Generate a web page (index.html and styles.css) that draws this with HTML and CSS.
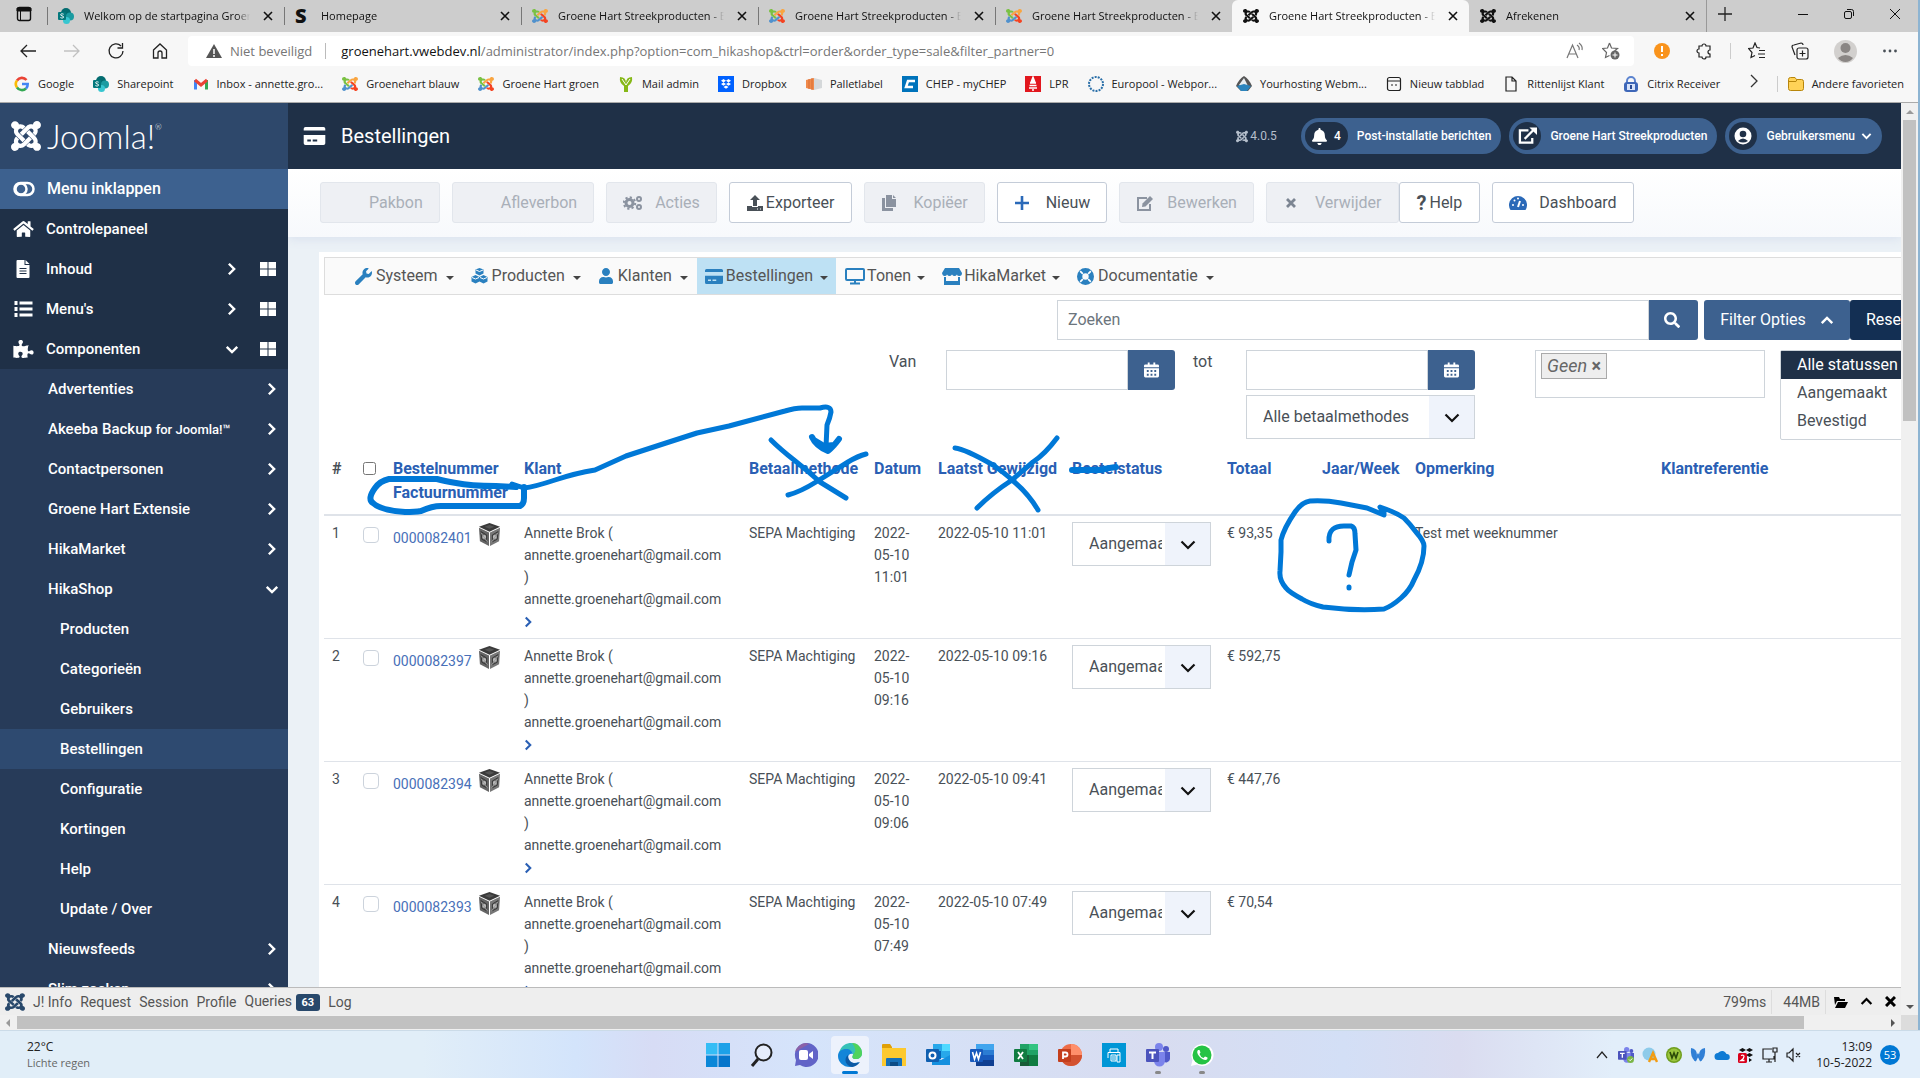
FILE: index.html
```html
<!DOCTYPE html>
<html lang="nl">
<head>
  <meta charset="UTF-8" />
  <title>Bestellingen - Groene Hart Streekproducten</title>
  <link rel="stylesheet" href="styles.css">
</head>
<body>

<svg class="defs" aria-hidden="true">
  <symbol id="joomla" viewBox="0 0 448 512" preserveAspectRatio="none">
    <path class="j1" d="M.6 92.1C.6 58.8 27.4 32 60.4 32c30 0 54.5 21.9 59.2 50.2 32.6-7.6 67.1.6 96.5 30l-44.3 44.3c-20.5-20.5-42.6-16.3-55.4-3.5-14.3 14.3-14.3 37.9 0 52.2l99.5 99.5-44 44.3c-87.7-87.2-49.7-49.7-99.8-99.7-26.8-26.5-35-64.8-24.8-98.9C20.4 144.6.6 120.7.6 92.1z"/>
    <path class="j2" d="M130.1 208.5l44.3 44.3c10-10 89.7-89.7 99.7-99.8 14.3-14.3 37.6-14.3 51.9 0 12.8 12.8 17 35-3.5 55.4l44 44.3c31.2-31.2 38.5-67.6 28.9-101.2 29.2-4.1 51.9-29.2 51.9-59.5 0-33.2-26.8-60.1-59.8-60.1-30.3 0-55.4 22.5-59.5 51.6-33.8-9.9-71.7-1.5-98.3 25.1-18.3 19.1-71.1 71.5-99.6 99.9z"/>
    <path class="j3" d="M396.4 360.7c8.2-32.7-.9-68.5-26.3-93.9-11.8-12.2 5 4.7-99.5-99.7l-44.3 44.3 99.7 99.7c14.3 14.3 14.3 37.6 0 51.9-12.8 12.8-35 17-55.4-3.5l-44 44.3c27.6 30.2 68 38.8 102.7 28 5.5 27.4 29.7 48.1 58.9 48.1 33 0 59.8-26.8 59.8-60.1 0-30.2-22.5-55-51.6-59.1z"/>
    <path class="j4" d="M312.1 307.6l-44-44.3c-87 86.4-50.4 50.4-99.7 99.8-14.3 14.3-37.6 14.3-51.9 0-13.1-13.4-16.9-35.3 3.2-55.4l-44-44.3c-30.2 30.2-38 65.2-29.5 98.3-26.7 6-46.2 29.9-46.2 58.2C0 453.2 26.8 480 59.8 480c28.6 0 52.5-19.8 58.6-46.7 32.7 8.2 68.5-.6 94.2-26 32.1-32 12.2-12.4 99.5-99.7z"/>
  </symbol>
  <symbol id="close" viewBox="0 0 16 16"><path d="M4 4l8 8M12 4l-8 8" fill="none" stroke="currentColor" stroke-width="1.6"/></symbol>
  <symbol id="sharepoint" viewBox="0 0 16 16"><circle cx="8" cy="5" r="5" fill="#036c70"/><circle cx="12" cy="8.500" r="4" fill="#1a9ba1"/><circle cx="8.500" cy="12.500" r="3.500" fill="#37c6d0"/><rect y="4" width="8" height="8" rx="1" fill="#03787c"/><path d="M5.600 6.200c-1.400-.7-3-.4-3 .6 0 1.300 3 .8 3 2.200 0 1.100-1.800 1.300-3.200.6" fill="none" stroke="#fff"/></symbol>
  <symbol id="right" viewBox="0 0 10 16"><path d="M2 2l6 6-6 6" fill="none" stroke="currentColor" stroke-width="2.800"/></symbol>
  <symbol id="down" viewBox="0 0 16 10"><path d="M2 2l6 6 6-6" fill="none" stroke="currentColor" stroke-width="2.800"/></symbol>
  <symbol id="down-thin" viewBox="0 0 16 10"><path d="M1.500 1.500L8 8l6.500-6.500" fill="none" stroke="currentColor" stroke-width="2.200"/></symbol>
  <symbol id="grid" viewBox="0 0 16 14"><path d="M0 0h7.500v6.500H0zM8.500 0H16v6.500H8.500zM0 7.500h7.500V14H0zM8.500 7.500H16V14H8.500z" fill="currentColor"/></symbol>
  <symbol id="card" viewBox="0 0 24 20"><path d="M2 0h20a2 2 0 0 1 2 2v2H0V2a2 2 0 0 1 2-2zM0 9h24v9a2 2 0 0 1-2 2H2a2 2 0 0 1-2-2zM4 14v2h4v-2zM10 14v2h5v-2z" fill="currentColor" fill-rule="evenodd"/></symbol>
  <symbol id="calendar" viewBox="0 0 16 16"><path d="M4 0h2v2h4V0h2v2h2.500A1.500 1.500 0 0 1 16 3.500V5H0V3.500A1.500 1.500 0 0 1 1.500 2H4zM0 6h16v8.500a1.500 1.500 0 0 1-1.500 1.500h-13A1.500 1.500 0 0 1 0 14.500zM3 8v2h2V8zM7 8v2h2V8zM11 8v2h2V8zM3 12v2h2v-2zM7 12v2h2v-2zM11 12v2h2v-2z" fill="currentColor" fill-rule="evenodd"/></symbol>
  <symbol id="box3d" viewBox="0 0 24 24"><path d="M12 0l11 4-11 5L1 4z" fill="#3a3a3a"/><path d="M1 5l10.500 5v14L2 19z" fill="#666"/><path d="M23 5l-10.500 5v14L22 19z" fill="#777"/><path d="M3 9l6 3.500v7L4 17zM21 9l-6 3.500v7l5-2.500z" fill="none" stroke="#333"/><circle cx="6.500" cy="14.500" r="2" fill="#bbb"/><circle cx="17.500" cy="14.500" r="2" fill="#bbb"/><path d="M7 4l5-2 5 2-5 2z" fill="#555"/><path d="M3 10l7 10M21 10l-7 10" stroke="#999"/></symbol>
  <symbol id="teams" viewBox="0 0 24 24"><circle cx="20" cy="6" r="3" fill="#5059c9"/><circle cx="13" cy="4" r="4" fill="#7b83eb"/><path d="M17 9h7v7a4 4 0 0 1-7 2z" fill="#5059c9"/><path d="M8 9h11v9a5 5 0 0 1-11 0z" fill="#7b83eb"/><rect y="6" width="13" height="13" rx="1" fill="#4b53bc"/><path d="M3 9.500h7M6.500 9.500V16" stroke="#fff" stroke-width="2"/></symbol>
</svg>

<div class="window">
  <header class="tabstrip">
    <button class="tab-actions" aria-label="Tabbladacties"><svg width="16" height="16" viewBox="0 0 16 16"><rect x="1.500" y="1.500" width="13" height="13" rx="2" fill="none" stroke="#111" stroke-width="1.400"/><path d="M1 2h14v3H1zM4.500 5v9" stroke="#111" /></svg></button>
    <div class="tab"><svg class="ic"><use href="#sharepoint"/></svg><span>Welkom op de startpagina Groene Hart</span><button aria-label="Sluiten"><svg class="ic"><use href="#close"/></svg></button></div>
    <div class="tab"><b class="s-logo">S</b><span>Homepage</span><button aria-label="Sluiten"><svg class="ic"><use href="#close"/></svg></button></div>
    <div class="tab"><svg class="ic color"><use href="#joomla"/></svg><span>Groene Hart Streekproducten - Bestel</span><button aria-label="Sluiten"><svg class="ic"><use href="#close"/></svg></button></div>
    <div class="tab"><svg class="ic color"><use href="#joomla"/></svg><span>Groene Hart Streekproducten - Bestel</span><button aria-label="Sluiten"><svg class="ic"><use href="#close"/></svg></button></div>
    <div class="tab"><svg class="ic color"><use href="#joomla"/></svg><span>Groene Hart Streekproducten - Bestel</span><button aria-label="Sluiten"><svg class="ic"><use href="#close"/></svg></button></div>
    <div class="tab active"><svg class="ic"><use href="#joomla"/></svg><span>Groene Hart Streekproducten - Bestel</span><button aria-label="Sluiten"><svg class="ic"><use href="#close"/></svg></button></div>
    <div class="tab"><svg class="ic"><use href="#joomla"/></svg><span>Afrekenen</span><button aria-label="Sluiten"><svg class="ic"><use href="#close"/></svg></button></div>
    <button class="new-tab" aria-label="Nieuw tabblad"><svg width="16" height="16" viewBox="0 0 16 16"><path d="M8 1v14M1 8h14" stroke="#222" stroke-width="1.300"/></svg></button>
    <div class="win-buttons">
      <button aria-label="Minimaliseren"><svg width="12" height="12"><path d="M1 6.500h10" stroke="#111"/></svg></button>
      <button aria-label="Vorig formaat"><svg width="12" height="12" viewBox="0 0 12 12"><rect x="1.500" y="3.500" width="7" height="7" rx="1.500" fill="none" stroke="#111"/><path d="M4 1.500h4.500a2 2 0 0 1 2 2V8" fill="none" stroke="#111"/></svg></button>
      <button aria-label="Venster sluiten"><svg width="12" height="12"><path d="M1 1l10 10M11 1L1 11" stroke="#111"/></svg></button>
    </div>
  </header>

  <div class="toolbar">
    <div class="nav-buttons">
      <button aria-label="Vorige"><svg width="18" height="18" viewBox="0 0 18 18"><path d="M17 9H2M8 3L2 9l6 6"/></svg></button>
      <button class="off" aria-label="Volgende"><svg width="18" height="18" viewBox="0 0 18 18"><path d="M1 9h15M10 3l6 6-6 6"/></svg></button>
      <button aria-label="Vernieuwen"><svg width="18" height="18" viewBox="0 0 18 18"><path d="M16 9a7 7 0 1 1-2-5M15.500 1v5h-5"/></svg></button>
      <button aria-label="Start"><svg width="18" height="18" viewBox="0 0 18 18"><path d="M2.500 8L9 2l6.500 6v8H11v-5a2 2 0 0 0-4 0v5H2.500z"/></svg></button>
    </div>
    <div class="address">
      <svg width="16" height="16" viewBox="0 0 16 16"><path d="M8 1l8 14H0z" fill="#555"/><path d="M8 6v5M8 12v2" stroke="#fff" stroke-width="1.500"/></svg>
      <span class="insecure">Niet beveiligd</span>
      <span class="url"><b>groenehart.vwebdev.nl</b>/administrator/index.php?option=com_hikashop&amp;ctrl=order&amp;order_type=sale&amp;filter_partner=0</span>
      <svg class="read" width="18" height="18" viewBox="0 0 18 18"><path d="M1 16L6.500 3 12 16M3 12h7M11 3q3 2 2 5M13 1q4 3 3 7" fill="none" stroke="#777" stroke-width="1.200"/></svg>
      <svg width="18" height="18" viewBox="0 0 18 18"><path d="M7.500 1l2 5 6 .5-3 2.500M7.500 1l-2 5-5 .5 4 4-1 5 4-2" fill="none" stroke="#666" stroke-width="1.200"/><circle cx="13" cy="13" r="4.500" fill="#666"/><path d="M13 10.500v5M10.500 13h5" stroke="#fff"/></svg>
    </div>
    <div class="ext-buttons">
      <svg width="16" height="16" viewBox="0 0 16 16"><circle cx="8" cy="8" r="8" fill="#f9931c"/><path d="M8 3v6M8 11v2" stroke="#fff" stroke-width="2"/></svg>
      <svg class="line" width="18" height="18" viewBox="0 0 18 18"><path d="M5 4h2a2 2 0 0 1 4 0h4v4a2 2 0 0 0 0 4v3h-4a2 2 0 0 1-4 0H4v-4a2 2 0 0 1 0-4V4z"/></svg>
      <i class="bar"></i>
      <svg class="line" width="18" height="18" viewBox="0 0 18 18"><path d="M12 6l-3-.5L7 1 5 6l-4.500.500 3.500 4-1 5 4-2M11 8.500h6M10 12h7M11 15.500h6"/></svg>
      <svg class="line" width="18" height="18" viewBox="0 0 18 18"><rect x="6" y="6" width="11" height="11" rx="2"/><path d="M11.500 8.500v6M8.500 11.500h6M4 13L1 5q0-2 2-2l7-2q2 0 2 2"/></svg>
      <svg width="23" height="23" viewBox="0 0 23 23"><circle cx="11.500" cy="11.500" r="11.500" fill="#d2d0ce"/><circle cx="11.500" cy="8" r="5" fill="#8a8684"/><path d="M4 18q7.500-6 15 0-3 4-7.500 4T4 18z" fill="#8a8684"/></svg>
      <svg width="16" height="16"><circle cx="2.500" cy="8" r="1.400"/><circle cx="8" cy="8" r="1.400"/><circle cx="13.500" cy="8" r="1.400"/></svg>
    </div>
  </div>

  <nav class="favorites">
    <a href="#"><svg class="ic" viewBox="0 0 16 16" fill="none" stroke-width="2.600"><path d="M3 4.500A6 6 0 0 1 12.500 4" stroke="#ea4335"/><path d="M3 4.500a6 6 0 0 0 0 7" stroke="#fbbc05"/><path d="M3 11.500a6 6 0 0 0 9 1" stroke="#34a853"/><path d="M12 12.500A6 6 0 0 0 13.700 8H8" stroke="#4285f4"/></svg>Google</a>
    <a href="#"><svg class="ic"><use href="#sharepoint"/></svg>Sharepoint</a>
    <a href="#"><svg class="ic" viewBox="0 0 16 16" fill="none" stroke-width="3"><path d="M2.500 13.500V4" stroke="#4285f4"/><path d="M13.500 13.500V4" stroke="#34a853"/><path d="M2 4l6 5 6-5" stroke="#ea4335"/></svg>Inbox - annette.gro...</a>
    <a href="#"><svg class="ic color"><use href="#joomla"/></svg>Groenehart blauw</a>
    <a href="#"><svg class="ic color"><use href="#joomla"/></svg>Groene Hart groen</a>
    <a href="#"><svg class="ic" viewBox="0 0 16 16"><path d="M2 1q6 0 6 6 0-6 6-6 1 6-4 9v6H6v-6Q1 7 2 1z" fill="#86b817"/><path d="M4 3l4 6 4-6" stroke="#fff" fill="none"/></svg>Mail admin</a>
    <a href="#"><svg class="ic" viewBox="0 0 16 16"><rect width="16" height="16" fill="#0061ff"/><path d="M5.500 3L8 4.700 5.500 6.400 3 4.700zM10.500 3L13 4.700l-2.500 1.700L8 4.700zM5.500 6.400L8 8.100 5.500 9.800 3 8.100zM10.500 6.400L13 8.100l-2.500 1.700L8 8.100zM8 9.500l2.500 1.600L8 12.800l-2.500-1.700z" fill="#fff"/></svg>Dropbox</a>
    <a href="#"><svg class="ic" viewBox="0 0 16 16"><path d="M0 4l8-2v12l-8-2z" fill="#f08a4b"/><path d="M8 2l8 2v8l-8 2z" fill="#d5d8da"/><path d="M3 3v10M6 2v12" stroke="#d96f35"/></svg>Palletlabel</a>
    <a href="#"><svg class="ic" viewBox="0 0 16 16"><rect width="16" height="16" fill="#0073bb"/><path d="M13 5H6l-2 6h7" fill="none" stroke="#fff" stroke-width="2.500"/></svg>CHEP - myCHEP</a>
    <a href="#"><svg class="ic" viewBox="0 0 16 16"><rect width="16" height="16" fill="#e2171e"/><path d="M8 1l2 5H6zM5 7h6M4.500 9.500h7M4 12h8M7 14h2" fill="#fff" stroke="#fff" stroke-width="1.300"/></svg>LPR</a>
    <a href="#"><svg class="ic" viewBox="0 0 16 16"><circle cx="8" cy="8" r="7" fill="none" stroke="#2a6fa8" stroke-width="2" stroke-dasharray="2 1.140"/></svg>Europool - Webpor...</a>
    <a href="#"><svg class="ic" viewBox="0 0 16 16"><path d="M8 0q5 3 8 10l-4 5H5L0 10Q3 3 8 0z" fill="#555"/><path d="M8 2l4 8-4 3-5-4z" fill="#e8eef2"/><path d="M1 10l7-2 7 2-4 5H5z" fill="#2b84bd"/></svg>Yourhosting Webm...</a>
    <a href="#"><svg class="ic line" viewBox="0 0 16 16"><rect x="1.500" y="1.500" width="13" height="13" rx="2"/><path d="M2 5h12M5 9h2M9 9h2"/></svg>Nieuw tabblad</a>
    <a href="#"><svg class="ic line" viewBox="0 0 16 16"><path d="M3 1h6l4 4v10H3zM9 1v4h4"/></svg>Rittenlijst Klant</a>
    <a href="#"><svg class="ic" viewBox="0 0 16 16"><path d="M4 7V5a4 4 0 0 1 8 0v2" fill="none" stroke="#5b83cf" stroke-width="2"/><rect x="1" y="6" width="14" height="10" rx="3" fill="#3e67b8"/><path d="M4 8h8v6H4z" fill="#d7e3fa"/><path d="M8 9v4" stroke="#2a4a94" stroke-width="2"/></svg>Citrix Receiver</a>
    <button class="more" aria-label="Meer"><svg width="8" height="14" viewBox="0 0 8 14"><path d="M1 1l6 6-6 6" fill="none" stroke="#333" stroke-width="1.300"/></svg></button>
    <a href="#" class="other"><svg class="ic" viewBox="0 0 16 16"><path d="M.5 3.500a2 2 0 0 1 2-2H7l1.500 2h5a2 2 0 0 1 2 2v7a2 2 0 0 1-2 2h-11a2 2 0 0 1-2-2z" fill="#ffd257" stroke="#b8860b"/><path d="M1 5.500h7l1-2" stroke="#b8860b" fill="none"/></svg>Andere favorieten</a>
  </nav>

  <div class="viewport">
    <div class="page">
      <div class="admin">
        <aside class="sidebar">
          <div class="brand"><svg width="30" height="34"><use href="#joomla"/></svg><span>Joomla!</span><sup>®</sup></div>
          <button class="collapse"><svg width="22" height="16" viewBox="0 0 22 16"><rect x="1.500" y="2" width="19" height="12" rx="6" fill="none" stroke="#fff" stroke-width="2.500"/><circle cx="8" cy="8" r="5.500" fill="none" stroke="#fff" stroke-width="2.500"/></svg>Menu inklappen</button>
          <nav class="main-menu">
            <a href="#"><svg class="mi" viewBox="0 0 576 512"><path fill="#fff" d="M280.37 148.26L96 300.11V464a16 16 0 0 0 16 16l112.060-.29a16 16 0 0 0 15.920-16V368a16 16 0 0 1 16-16h64a16 16 0 0 1 16 16v95.640a16 16 0 0 0 16 16.050L464 480a16 16 0 0 0 16-16V300L295.670 148.260a12.190 12.190 0 0 0-15.300 0zM571.600 251.470L488 182.560V44.050a12 12 0 0 0-12-12h-56a12 12 0 0 0-12 12v72.610L318.470 43a48 48 0 0 0-61 0L4.340 251.470a12 12 0 0 0-1.600 16.900l25.500 31A12 12 0 0 0 45.150 301l235.220-193.740a12.190 12.190 0 0 1 15.300 0L530.900 301a12 12 0 0 0 16.900-1.600l25.500-31a12 12 0 0 0-1.700-16.930z"/></svg><span>Controlepaneel</span></a>
            <a href="#"><svg class="mi" viewBox="0 0 20 18"><path d="M4 0h7v5h5v12a1 1 0 0 1-1 1H4a1 1 0 0 1-1-1V1a1 1 0 0 1 1-1zM12 0l4 4h-4z" fill="#fff"/><path d="M6 8.500h7M6 11h7M6 13.500h7" stroke="#1f3047"/></svg><span>Inhoud</span><svg class="chev"><use href="#right"/></svg><svg class="gr"><use href="#grid"/></svg></a>
            <a href="#"><svg class="mi" viewBox="0 0 20 18"><path d="M1 3h3M1 9h3M1 15h3" stroke="#fff" stroke-width="4"/><path d="M6 3h13M6 9h13M6 15h13" stroke="#fff" stroke-width="3"/></svg><span>Menu's</span><svg class="chev"><use href="#right"/></svg><svg class="gr"><use href="#grid"/></svg></a>
            <a href="#"><svg class="mi" viewBox="0 0 576 512"><path fill="#fff" d="M519.442 288.651c-41.519 0-59.5 31.593-82.058 31.593C377.409 320.244 432 144 432 144s-196.288 80-196.288-3.297c0-35.827 36.288-46.250 36.288-85.985C272 19.216 243.885 0 210.539 0c-34.654 0-66.366 18.891-66.366 56.346 0 41.364 31.711 59.277 31.711 81.750C175.885 207.719 0 166.758 0 166.758v333.237s178.635 41.047 178.635-28.662c0-22.473-40-40.107-40-81.471 0-37.456 29.250-56.346 63.577-56.346 33.673 0 61.788 19.216 61.788 54.717 0 39.735-36.288 50.158-36.288 85.985 0 60.803 129.675 25.730 181.230 25.730 0 0-34.725-120.101 25.827-120.101 35.962 0 46.423 36.152 86.308 36.152C556.712 416 576 387.990 576 354.443c0-34.199-18.962-65.792-56.558-65.792z"/></svg><span>Componenten</span><svg class="chev open"><use href="#down"/></svg><svg class="gr"><use href="#grid"/></svg></a>
          </nav>
          <nav class="sub-menu">
            <a href="#"><span>Advertenties</span><svg class="chev"><use href="#right"/></svg></a>
            <a href="#"><span>Akeeba Backup <small>for Joomla!™</small></span><svg class="chev"><use href="#right"/></svg></a>
            <a href="#"><span>Contactpersonen</span><svg class="chev"><use href="#right"/></svg></a>
            <a href="#"><span>Groene Hart Extensie</span><svg class="chev"><use href="#right"/></svg></a>
            <a href="#"><span>HikaMarket</span><svg class="chev"><use href="#right"/></svg></a>
            <a href="#"><span>HikaShop</span><svg class="chev open"><use href="#down"/></svg></a>
            <a href="#" class="lvl3">Producten</a>
            <a href="#" class="lvl3">Categorieën</a>
            <a href="#" class="lvl3">Gebruikers</a>
            <a href="#" class="lvl3 current">Bestellingen</a>
            <a href="#" class="lvl3">Configuratie</a>
            <a href="#" class="lvl3">Kortingen</a>
            <a href="#" class="lvl3">Help</a>
            <a href="#" class="lvl3">Update / Over</a>
            <a href="#"><span>Nieuwsfeeds</span><svg class="chev"><use href="#right"/></svg></a>
            <a href="#"><span>Slim zoeken</span><svg class="chev"><use href="#right"/></svg></a>
          </nav>
        </aside>

        <main class="content">
          <div class="topbar">
            <svg width="23" height="18"><use href="#card"/></svg>
            <h1>Bestellingen</h1>
            <span class="version"><svg width="12" height="13"><use href="#joomla"/></svg>4.0.5</span>
            <a href="#" class="pill"><span class="pill-ic wide"><svg width="15" height="17" viewBox="0 0 448 512"><path fill="#fff" d="M224 512c35.320 0 63.970-28.650 63.970-64H160.030c0 35.350 28.650 64 63.970 64zm215.390-149.710c-19.320-20.760-55.470-51.990-55.470-154.290 0-77.700-54.480-139.900-127.940-155.160V32c0-17.670-14.320-32-31.980-32s-31.980 14.330-31.980 32v20.840C118.560 68.100 64.080 130.300 64.080 208c0 102.300-36.150 133.530-55.470 154.290-6 6.450-8.660 14.160-8.610 21.710.11 16.400 12.980 32 32.100 32h383.800c19.120 0 32-15.600 32.100-32 .05-7.550-2.610-15.270-8.610-21.710z"/></svg>4</span>Post-installatie berichten</a>
            <a href="#" class="pill"><span class="pill-ic"><svg width="19" height="18" viewBox="0 0 20 18" fill="none" stroke="#fff" stroke-width="2.400"><path d="M11 3H2v13h13v-5M7 12l9-9"/><path d="M12 0h8v8z" fill="#fff" stroke="none"/></svg></span>Groene Hart Streekproducten</a>
            <a href="#" class="pill"><span class="pill-ic"><svg width="18" height="18" viewBox="0 0 18 18"><circle cx="9" cy="9" r="8.500" fill="#fff"/><circle cx="9" cy="7" r="3.300" fill="#1f3047"/><path d="M4 14q5-5 10 0-5 3-10 0z" fill="#1f3047"/></svg></span>Gebruikersmenu<svg class="caret" width="11" height="8"><use href="#down"/></svg></a>
          </div>

          <div class="actions">
            <button class="btn" disabled><i></i>Pakbon</button>
            <button class="btn" disabled><i></i>Afleverbon</button>
            <button class="btn wide-ic" disabled><svg width="20" height="16" viewBox="0 0 20 16" fill="none" stroke="#8b93a0"><circle cx="6.500" cy="8" r="3.500" stroke-width="3"/><circle cx="6.500" cy="8" r="5.700" stroke-width="2" stroke-dasharray="2.200 2.200"/><circle cx="16" cy="4" r="2" stroke-width="2"/><circle cx="16" cy="12" r="2" stroke-width="2"/></svg>Acties</button>
            <button class="btn tight"><svg width="16" height="16" viewBox="0 0 16 16"><path d="M8 0l5 5H10v6H6V5H3zM0 11h5v1h6v-1h5v5H0z" fill="#495057"/><path d="M10 14h1M13 14h1" stroke="#fff"/></svg>Exporteer</button>
            <button class="btn" disabled><svg width="16" height="16" viewBox="0 0 16 16"><path d="M5 0h6v4h4v8H5zM12 0l3 3h-3zM1 3h3v10h8v3H1z" fill="#8b93a0"/></svg>Kopiëer</button>
            <button class="btn"><svg width="16" height="16"><path d="M8 1v14M1 8h14" stroke="#2a69b8" stroke-width="2.600"/></svg>Nieuw</button>
            <button class="btn wide-ic" disabled><svg width="19" height="16" viewBox="0 0 19 16"><path d="M11 3H2v12h12V9" fill="none" stroke="#8b93a0" stroke-width="2"/><path d="M6 12l.500-3.500L14 1l3 3-7.500 7.500z" fill="#8b93a0"/></svg>Bewerken</button>
            <button class="btn" disabled><svg width="16" height="16"><path d="M4 4l8 8M12 4l-8 8" stroke="#7c8592" stroke-width="2.800"/></svg>Verwijder</button>
            <button class="btn tight join"><b>?</b>Help</button>
            <button class="btn wide-ic"><svg width="18" height="16" viewBox="0 0 18 16"><path d="M1.500 15a9 9 0 1 1 15 0z" fill="#2a69b8"/><path d="M9 12l2-6" stroke="#fff" stroke-width="2"/><circle cx="4" cy="10" r="1" fill="#fff"/><circle cx="5.500" cy="5.500" r="1" fill="#fff"/><circle cx="9" cy="3.500" r="1" fill="#fff"/><circle cx="14" cy="10" r="1" fill="#fff"/></svg>Dashboard</button>
          </div>

          <section class="card">
            <nav class="hika-menu">
              <a href="#"><svg width="17" height="17" viewBox="0 0 512 512"><path fill="#2a80bf" d="M507.730 109.100c-2.240-9.030-13.540-12.090-20.120-5.510l-74.360 74.360-67.880-11.310-11.310-67.880 74.360-74.360c6.620-6.620 3.430-17.900-5.660-20.160-47.380-11.740-99.550.91-136.580 37.930-39.640 39.640-50.550 97.100-34.050 147.200L18.740 402.760c-24.990 24.990-24.990 65.510 0 90.500 24.990 24.990 65.510 24.990 90.500 0l213.210-213.210c50.120 16.710 107.470 5.680 147.370-34.220 37.070-37.070 49.700-89.320 37.910-136.730z"/></svg>Systeem</a>
              <a href="#"><svg width="17" height="16" viewBox="0 0 17 16"><path d="M8.500 0l4 1.500v4l-4 2-4-2v-4zM4.500 7l4 2v4.500l-4 2-4-2V9zM12.500 7l4 2v4.500l-4 2-4-2V9z" fill="#2a80bf"/><path d="M5 2l3.500 1.500L12 2M1 9.500L4.500 11 8 9.500M9 9.500l3.500 1.500L16 9.500" stroke="#fff" fill="none"/></svg>Producten</a>
              <a href="#"><svg width="16" height="16" viewBox="0 0 448 512"><path fill="#2a80bf" d="M224 256c70.700 0 128-57.300 128-128S294.700 0 224 0 96 57.300 96 128s57.300 128 128 128zm89.600 32h-16.700c-22.200 10.200-46.900 16-72.900 16s-50.600-5.800-72.900-16h-16.700C60.200 288 0 348.200 0 422.400V464c0 26.500 21.500 48 48 48h352c26.500 0 48-21.500 48-48v-41.600c0-74.200-60.200-134.400-134.400-134.400z"/></svg>Klanten</a>
              <a href="#" class="on"><svg width="18" height="15"><use href="#card"/></svg>Bestellingen</a>
              <a href="#" class="snug"><svg width="20" height="17" viewBox="0 0 20 17"><rect x="1" y="1" width="18" height="11" rx="1" fill="none" stroke="#2a80bf" stroke-width="2"/><path d="M10 12v3M5 15.500h10" stroke="#2a80bf" stroke-width="2"/></svg>Tonen</a>
              <a href="#" class="snug"><svg width="20" height="17" viewBox="0 0 20 17"><path d="M3 0h14l3 5q0 3-2.500 3T15 6.500Q14 8 12.500 8T10 6.500Q9 8 7.500 8T5 6.500Q4.500 8 2.500 8T0 5zM2 9h2v4h12V9h2v8H2z" fill="#2a80bf"/></svg>HikaMarket</a>
              <a href="#"><svg width="17" height="17" viewBox="0 0 16 16"><circle cx="8" cy="8" r="5.500" fill="none" stroke="#2a80bf" stroke-width="5"/><path d="M3 3l2.500 2.500M13 3l-2.500 2.500M3 13l2.500-2.500M13 13l-2.500-2.500" stroke="#fff" stroke-width="1.600"/></svg>Documentatie</a>
            </nav>

            <form class="filters">
              <div class="frow">
                <div class="group search"><input type="text" placeholder="Zoeken" aria-label="Zoeken"><button type="button" aria-label="Zoek"><svg width="16" height="16" viewBox="0 0 512 512"><path fill="#fff" d="M505 442.700L405.300 343c-4.500-4.500-10.600-7-17-7H372c27.600-35.300 44-79.700 44-128C416 93.100 322.900 0 208 0S0 93.100 0 208s93.100 208 208 208c48.300 0 92.700-16.400 128-44v16.300c0 6.400 2.500 12.500 7 17l99.700 99.700c9.400 9.400 24.600 9.400 33.900 0l28.300-28.300c9.400-9.400 9.400-24.600.1-34zM208 336c-70.700 0-128-57.200-128-128 0-70.700 57.200-128 128-128 70.700 0 128 57.200 128 128 0 70.700-57.200 128-128 128z"/></svg></button></div>
                <button type="button" class="filter-btn">Filter Opties<svg class="up" width="14" height="9"><use href="#down"/></svg></button>
                <button type="button" class="reset-btn">Reset</button>
              </div>
              <div class="frow second">
                <label class="van" for="from">Van</label>
                <div class="group date"><input type="text" id="from"><button type="button" aria-label="Kalender"><svg width="15" height="16"><use href="#calendar"/></svg></button></div>
                <label class="tot" for="to">tot</label>
                <div class="pay">
                  <div class="group date"><input type="text" id="to"><button type="button" aria-label="Kalender"><svg width="15" height="16"><use href="#calendar"/></svg></button></div>
                  <div class="pick"><select aria-label="Betaalmethode"><option>Alle betaalmethodes</option></select><svg><use href="#down-thin"/></svg></div>
                </div>
                <div class="tags"><span>Geen <b>×</b></span></div>
                <select class="statuses" multiple size="3" aria-label="Statussen"><option selected>Alle statussen</option><option>Aangemaakt</option><option>Bevestigd</option></select>
              </div>
            </form>

            <table class="orders">
              <colgroup><col class="c-num"><col class="c-check"><col class="c-order"><col class="c-client"><col class="c-pay"><col class="c-date"><col class="c-mod"><col class="c-status"><col class="c-total"><col class="c-week"><col class="c-note"><col></colgroup>
              <thead>
                <tr><th class="hash">#</th><th><input type="checkbox" aria-label="Alles"></th><th><a href="#">Bestelnummer</a><br><a href="#">Factuurnummer</a></th><th><a href="#">Klant</a></th><th><a href="#">Betaalmethode</a></th><th><a href="#">Datum</a></th><th><a href="#">Laatst Gewijzigd</a></th><th><a href="#">Bestelstatus</a></th><th><a href="#">Totaal</a></th><th><a href="#">Jaar/Week</a></th><th><a href="#">Opmerking</a></th><th><a href="#">Klantreferentie</a></th></tr>
              </thead>
              <tbody>
                <tr>
                  <td>1</td><td><input type="checkbox" aria-label="Bestelling 1"></td>
                  <td><a href="#" class="order">0000082401<svg><use href="#box3d"/></svg></a></td>
                  <td class="client">Annette Brok ( annette.groenehart@gmail.com ) annette.groenehart@gmail.com<br><a href="#" aria-label="Klant"><svg class="go"><use href="#right"/></svg></a></td>
                  <td>SEPA Machtiging</td><td>2022-05-10 11:01</td><td class="nw">2022-05-10 11:01</td>
                  <td><div class="pick"><select aria-label="Status"><option>Aangemaakt</option></select><svg><use href="#down-thin"/></svg></div></td>
                  <td>€ 93,35</td><td></td><td>Test met weeknummer</td><td></td>
                </tr>
                <tr>
                  <td>2</td><td><input type="checkbox" aria-label="Bestelling 2"></td>
                  <td><a href="#" class="order">0000082397<svg><use href="#box3d"/></svg></a></td>
                  <td class="client">Annette Brok ( annette.groenehart@gmail.com ) annette.groenehart@gmail.com<br><a href="#" aria-label="Klant"><svg class="go"><use href="#right"/></svg></a></td>
                  <td>SEPA Machtiging</td><td>2022-05-10 09:16</td><td class="nw">2022-05-10 09:16</td>
                  <td><div class="pick"><select aria-label="Status"><option>Aangemaakt</option></select><svg><use href="#down-thin"/></svg></div></td>
                  <td>€ 592,75</td><td></td><td></td><td></td>
                </tr>
                <tr>
                  <td>3</td><td><input type="checkbox" aria-label="Bestelling 3"></td>
                  <td><a href="#" class="order">0000082394<svg><use href="#box3d"/></svg></a></td>
                  <td class="client">Annette Brok ( annette.groenehart@gmail.com ) annette.groenehart@gmail.com<br><a href="#" aria-label="Klant"><svg class="go"><use href="#right"/></svg></a></td>
                  <td>SEPA Machtiging</td><td>2022-05-10 09:06</td><td class="nw">2022-05-10 09:41</td>
                  <td><div class="pick"><select aria-label="Status"><option>Aangemaakt</option></select><svg><use href="#down-thin"/></svg></div></td>
                  <td>€ 447,76</td><td></td><td></td><td></td>
                </tr>
                <tr>
                  <td>4</td><td><input type="checkbox" aria-label="Bestelling 4"></td>
                  <td><a href="#" class="order">0000082393<svg><use href="#box3d"/></svg></a></td>
                  <td class="client">Annette Brok ( annette.groenehart@gmail.com ) annette.groenehart@gmail.com<br><a href="#" aria-label="Klant"><svg class="go"><use href="#right"/></svg></a></td>
                  <td>SEPA Machtiging</td><td>2022-05-10 07:49</td><td class="nw">2022-05-10 07:49</td>
                  <td><div class="pick"><select aria-label="Status"><option>Aangemaakt</option></select><svg><use href="#down-thin"/></svg></div></td>
                  <td>€ 70,54</td><td></td><td></td><td></td>
                </tr>
              </tbody>
            </table>

            <!-- pen notes on top of the table -->
            <svg class="ink" width="1582" height="735" viewBox="319 252 1582 735">
              <path d="M516 487L496 486Q470 486 456 483Q444 481 437 479H389Q380 481 375 488Q367 499 373 503Q380 510 405 512Q415 512 421 511Q432 506 441 506H520Q524 504 524 498V487" stroke-width="6"/>
              <path d="M512 484L524 488Q534 487 555 480T595 470L626 456 666 443 697 433 729 426 785 411Q795 408 802 408H820Q831 405 831 412Q830 418 827 425L826 447"/>
              <path d="M812 437Q816 446 828 451Q833 447 839 439M814 440L824 446 834 445" stroke-width="6"/>
              <path d="M771 440Q780 449 794 460T820 482L846 498M866 454Q858 456 848 462L816 482Q800 492 788 495"/>
              <path d="M955 448Q965 449 993 465Q1006 474 1012 480Q1028 493 1038 510M1057 438Q1045 454 1033 462L1012 480Q992 493 977 508"/>
              <path d="M1072 470H1100Q1108 468 1116 467" stroke-width="6"/>
              <path d="M1384 513L1380 507Q1395 512 1404 518Q1410 524 1416 532Q1424 541 1424 546Q1424 562 1414 580Q1410 590 1401 598Q1392 606 1384 609Q1355 611 1323 607Q1310 604 1302 599Q1289 592 1286 588Q1279 580 1280 571L1281 552V540Q1284 528 1295 512Q1302 502 1310 501Q1325 500 1341 503L1367 508 1384 515"/>
              <path d="M1329 541Q1328 525 1346 526H1351Q1355 527 1355 534L1356 550 1352 562 1349 575M1349 587V588"/>
            </svg>
          </section>
        </main>
      </div>

      <footer class="debugbar">
        <svg width="20" height="20"><use href="#joomla"/></svg>
        <a href="#">J! Info</a><a href="#">Request</a><a href="#">Session</a><a href="#">Profile</a><a href="#">Queries <b>63</b></a><a href="#">Log</a>
        <span class="stat first">799ms</span><span class="stat">44MB</span>
        <span class="tools">
          <svg width="14" height="12" viewBox="0 0 14 12"><path d="M0 1h5l1 2h5v2H3L1 9zM4 6h10l-3 6H1z"/></svg>
          <svg class="up" width="13" height="9"><use href="#down"/></svg>
          <svg width="11" height="11" viewBox="0 0 11 11"><path d="M1 1l9 9M10 1l-9 9" stroke="#000" stroke-width="3"/></svg>
        </span>
      </footer>
    </div>
    <div class="vscroll"><i class="arrow-up"></i><div class="thumb"></div><i class="arrow-down"></i></div>
    <div class="hscroll"><i class="arrow-left"></i><div class="thumb"></div><i class="arrow-right"></i></div>
    <div class="corner"></div>
  </div>
</div>

<footer class="taskbar">
  <div class="weather"><span>22°C</span><span class="muted">Lichte regen</span></div>
  <div class="apps">
    <button aria-label="Start"><svg viewBox="0 0 24 24"><path d="M0 0h11.500v11.500H0z" fill="#35bdf5"/><path d="M12.500 0H24v11.500H12.500z" fill="#1da1e8"/><path d="M0 12.500h11.500V24H0z" fill="#0b87d8"/><path d="M12.500 12.500H24V24H12.500z" fill="#0675cb"/></svg></button>
    <button aria-label="Zoeken"><svg viewBox="0 0 24 24"><circle cx="13.500" cy="9.500" r="8" fill="#ffffff66" stroke="#222" stroke-width="2"/><path d="M8 16l-6 7" stroke="#222" stroke-width="3"/></svg></button>
    <button aria-label="Chat"><svg viewBox="0 0 24 24"><path d="M12 0a12 12 0 1 1-6 22l-5 1 1-6A12 12 0 0 1 12 0z" fill="#6264c7"/><path d="M12 0A12 12 0 0 0 1 9l14-8z" fill="#8b62a8"/><rect x="5" y="7" width="9" height="10" rx="2" fill="#fff"/><path d="M15 11l4-3v8l-4-3z" fill="#fff"/></svg></button>
    <button class="active" aria-label="Edge"><svg viewBox="0 0 24 24"><path d="M1 10C3 2 9 0 13 0c7 0 11 5 11 10 0 4-3 6-6 6-4 0-4-2-3-4 0-3-3-5-6-5S2 8 1 10z" fill="#35c1b8"/><path d="M14 0c6 0 10 5 10 10 0 4-3 6-6 6-4 0-4-2-3-4q5-5-1-12z" fill="#4fd35c"/><path d="M0 13C0 8 4 6 8 6c4 0 6 2 7 5-3-1-5 1-5 4 0 5 5 6 11 4-3 4-6 5-9 5C5 24 0 19 0 13z" fill="#1385d8"/><path d="M10 12c-5 4-2 11 4 12 3-.500 6-2 8-5-6 3-12 0-12-7z" fill="#0c59a4"/></svg></button>
    <button aria-label="Verkenner"><svg viewBox="0 0 24 24"><path d="M0 2q0-1 1-1h7l2 3v4H0z" fill="#e0a008"/><path d="M0 5h24v18H0z" fill="#fdc92f"/><path d="M4 16q0-1 1-1h14q1 0 1 1v7H4z" fill="#1670b8"/><path d="M8 19h8v4H8z" fill="#0c4c86"/></svg></button>
    <button aria-label="Outlook"><svg viewBox="0 0 24 24"><path d="M7 1h17v14H7z" fill="#28a8ea"/><path d="M7 8h8v8H7z" fill="#0364b8"/><path d="M16 1h8v7h-8z" fill="#50d9ff"/><path d="M6 12l9 5 9-5v10H6z" fill="#1490df"/><rect y="6" width="13" height="13" rx="1" fill="#0f5fb0"/><circle cx="6.500" cy="12.500" r="3" fill="none" stroke="#fff" stroke-width="2"/></svg></button>
    <button aria-label="Word"><svg viewBox="0 0 24 24"><path d="M6 1h18v6H6z" fill="#41a5ee"/><path d="M6 7h18v5H6z" fill="#2b7cd3"/><path d="M6 12h18v5H6z" fill="#185abd"/><path d="M6 17h18v6H6z" fill="#103f91"/><rect y="6" width="13" height="13" rx="1" fill="#185abd"/><path d="M2.500 9l2 7 2-6 2 6 2-7" fill="none" stroke="#fff" stroke-width="1.600"/></svg></button>
    <button aria-label="Excel"><svg viewBox="0 0 24 24"><path d="M6 1h9v11H6z" fill="#21a366"/><path d="M15 1h9v6h-9z" fill="#33c481"/><path d="M15 7h9v5h-9z" fill="#21a366"/><path d="M6 12h9v11H6z" fill="#185c37"/><path d="M15 12h9v11h-9z" fill="#107c41"/><rect y="6" width="13" height="13" rx="1" fill="#107c41"/><path d="M4 9l5 7M9 9l-5 7" stroke="#fff" stroke-width="1.800"/></svg></button>
    <button aria-label="PowerPoint"><svg viewBox="0 0 24 24"><circle cx="13" cy="12" r="11" fill="#ed6c47"/><path d="M13 1a11 11 0 0 1 11 11H13z" fill="#ff8f6b"/><path d="M2 12h22a11 11 0 0 1-22 0z" fill="#d35230"/><rect y="6" width="13" height="13" rx="1" fill="#c43e1c"/><path d="M5 16V9.500h2.500a2 2 0 0 1 0 4H5" fill="none" stroke="#fff" stroke-width="1.800"/></svg></button>
    <button aria-label="Printer"><svg viewBox="0 0 24 24"><rect width="24" height="24" fill="#0096d6"/><path d="M8 9V6h8v3M6 15V9.500h12V12M9 12h5v6H9zM10 14h3M10 16h3M15 12h3v7h-3z" fill="none" stroke="#fff"/></svg></button>
    <button class="running" aria-label="Teams"><svg><use href="#teams"/></svg></button>
    <button class="running" aria-label="WhatsApp"><svg viewBox="0 0 24 24"><path d="M12 1a11 11 0 1 1-5 20.500L1 23l1.500-6A11 11 0 0 1 12 1z" fill="#fff"/><circle cx="12" cy="12" r="9.500" fill="#25c344"/><path d="M8 7q-2 2 1 6t7 4q2-1 1.500-2.500L15 13.500l-1.500 1.500q-3-1-4-4L10.500 9.500 9.500 7z" fill="#fff"/></svg></button>
  </div>
  <div class="tray">
    <svg class="line" viewBox="0 0 16 16"><path d="M3 11l5-6 5 6"/></svg>
    <svg viewBox="0 0 16 16"><use href="#teams" width="16" height="16"/><circle cx="12.500" cy="12.500" r="3.500" fill="#7ab648"/><path d="M11 12.500l1.200 1.200 2-2.200" fill="none" stroke="#fff"/></svg>
    <svg viewBox="0 0 16 16"><circle cx="7" cy="7" r="6.500" fill="#8ecbea"/><path d="M7 15l4-9 4 9M8 12h5" fill="none" stroke="#f39c12" stroke-width="2.400"/></svg>
    <svg viewBox="0 0 16 16"><circle cx="8" cy="8" r="8" fill="#6f9e1d"/><circle cx="8" cy="8" r="6.500" fill="#9bc53d"/><path d="M4 5l2 6 2-5 2 5 2-6" fill="none" stroke="#2c4a08" stroke-width="1.600"/></svg>
    <svg viewBox="0 0 16 16"><path d="M1 1q6 1 6 7l-2 6Q0 10 1 1zM15 1Q9 2 9 8l2 6q5-4 4-13z" fill="#2f7fd6"/><path d="M5 14l3-6 3 6" stroke="#2f7fd6" stroke-width="2" fill="none"/></svg>
    <svg viewBox="0 0 16 16"><path d="M4 13a3.500 3.500 0 0 1 0-7 5 5 0 0 1 8.500 1 3 3 0 0 1 .5 6z" fill="#0f7bd4"/></svg>
    <svg viewBox="0 0 16 16"><path d="M4.500 1L8 3 4.500 5 1 3zM11.500 1L15 3l-3.500 2L8 3zM11.500 6L15 8l-3.500 2L8 8zM11 11l3 2-3 2z" fill="#111"/><rect x="0" y="6" width="9" height="10" rx="1.500" fill="#d9001b"/><path d="M3 8.500q3-1 3 1t-3 4h3.500" stroke="#fff" fill="none" stroke-width="1.300"/></svg>
    <svg class="line" viewBox="0 0 16 16"><path d="M10 2H1v10h11V9M4 15h6M7 12v3M11 1h4v4h-4zM13 5v10"/></svg>
    <svg class="line" viewBox="0 0 16 16"><path d="M1 6h2l4-4v12l-4-4H1zM10 6l4 4M14 6l-4 4"/></svg>
    <div class="clock"><span>13:09</span><span>10-5-2022</span></div>
    <b class="count">53</b>
  </div>
</footer>

</body>
</html>
```

FILE: styles.css
```css
* {
  box-sizing: border-box;
}
body {
  margin: 0;
  height: 100vh;
  display: flex;
  flex-direction: column;
  overflow: hidden;
  font-family: Roboto, sans-serif;
  font-size: 16px;
  line-height: 24px;
  color: #495057;
}
a {
  text-decoration: none;
  color: #2a5fb4;
}
button, input, select {
  font: inherit;
  color: inherit;
  margin: 0;
}
button {
  border: none;
  background: none;
  padding: 0;
  cursor: pointer;
}
svg {
  flex: none;
}
svg:not([fill]) {
  fill: currentColor;
}
.defs {
  position: absolute;
  width: 0;
  height: 0;
}
.ic {
  width: 16px;
  height: 16px;
}
.color {
  --j1: #7ac143;
  --j2: #f9a541;
  --j3: #f44321;
  --j4: #5091cd;
}
.j1 { fill: var(--j1, currentColor); }
.j2 { fill: var(--j2, currentColor); }
.j3 { fill: var(--j3, currentColor); }
.j4 { fill: var(--j4, currentColor); }
svg.line {
  fill: none;
  stroke: #222;
  stroke-width: 1.2px;
}
.up {
  transform: rotate(180deg);
}

/* browser */
.window {
  flex: 1;
  min-height: 0;
  display: flex;
  flex-direction: column;
  border-right: 2px solid #8db4d2;
  background: #f7f7f7;
}
.tabstrip {
  height: 32px;
  display: flex;
  background: #cdcdcd;
  font-family: "Open Sans", sans-serif;
  font-size: 11px;
  color: #111;
}
.tab-actions {
  width: 47px;
  padding-top: 4px;
}
.tab {
  flex: 0 1 237px;
  min-width: 0;
  display: flex;
  align-items: center;
  gap: 10px;
  padding: 0 8px 0 11px;
  position: relative;
}
.tab::before {
  content: "";
  position: absolute;
  left: 0;
  top: 7px;
  height: 18px;
  border-left: 1px solid #777;
}
.tab span {
  flex: 1;
  overflow: hidden;
  white-space: nowrap;
  mask-image: linear-gradient(to right, #000 92%, transparent);
}
.tab button {
  height: 16px;
  display: flex;
}
.tab.active {
  background: #f7f7f7;
  border-radius: 6px 6px 0 0;
}
.tab.active::before, .tab.active + .tab::before {
  display: none;
}
.s-logo {
  width: 16px;
  font-size: 20px;
  font-weight: 800;
}
.new-tab {
  width: 36px;
  padding-top: 4px;
  border-left: 1px solid #999;
}
.win-buttons {
  margin-left: auto;
  display: flex;
}
.win-buttons button {
  width: 46px;
}
.toolbar {
  height: 38px;
  display: flex;
  align-items: center;
}
.nav-buttons {
  display: flex;
  width: 188px;
  padding-left: 6px;
}
.nav-buttons button {
  width: 44px;
  display: flex;
  justify-content: center;
}
.nav-buttons button svg {
  fill: none;
  stroke: #222;
  stroke-width: 1.3px;
}
.nav-buttons .off {
  opacity: 0.25;
}
.address {
  flex: 1;
  height: 30px;
  display: flex;
  align-items: center;
  gap: 8px;
  padding: 0 14px 0 18px;
  background: #fff;
  border-radius: 4px;
  font-family: "Open Sans", sans-serif;
  font-size: 13px;
  color: #767676;
}
.insecure {
  padding-right: 13px;
  border-right: 1px solid #bbb;
  line-height: 16px;
}
.url {
  padding-left: 7px;
}
.url b {
  font-weight: 400;
  color: #111;
}
.read {
  margin-left: auto;
  margin-right: 10px;
}
.ext-buttons {
  display: flex;
  align-items: center;
  gap: 25px;
  padding: 0 20px;
}
.bar {
  height: 16px;
  margin: 0 -8px;
  border-left: 1px solid #ccc;
}
.favorites {
  height: 33px;
  display: flex;
  align-items: center;
  gap: 19px;
  padding: 0 14px 4px;
  border-bottom: 1px solid #aaa;
  font-family: "Open Sans", sans-serif;
  font-size: 11px;
  white-space: nowrap;
}
.favorites a {
  display: flex;
  align-items: center;
  gap: 8px;
  color: #222;
}
.more {
  margin-left: auto;
}
.favorites .other {
  padding-left: 10px;
  border-left: 1px solid #ccc;
  line-height: 16px;
}

/* page inside the browser, with its scrollbars */
.viewport {
  flex: 1;
  min-height: 0;
  display: grid;
  grid-template: minmax(0, 1fr) 15px / minmax(0, 1fr) 17px;
}
.page {
  display: flex;
  flex-direction: column;
  min-height: 0;
}
.admin {
  flex: 1;
  min-height: 0;
  display: flex;
  overflow: hidden;
}
.vscroll, .hscroll {
  display: flex;
  align-items: center;
  background: #f0f0f0;
}
.vscroll {
  flex-direction: column;
}
.vscroll .thumb {
  width: 13px;
  height: 33%;
  background: #c1c1c1;
}
.hscroll .thumb {
  height: 13px;
  width: 94%;
  background: #c1c1c1;
}
.corner {
  background: #dcdcdc;
}
.arrow-up, .arrow-down, .arrow-left, .arrow-right {
  border: 4px solid transparent;
}
.arrow-up {
  border-bottom-color: #999;
  margin: 3px 0 6px;
}
.arrow-down {
  border-top-color: #555;
  margin: auto 0 2px;
}
.arrow-left {
  border-right-color: #999;
  margin: 0 7px 0 2px;
}
.arrow-right {
  border-left-color: #555;
  margin: 0 2px 0 auto;
}

/* sidebar */
.sidebar {
  flex: none;
  width: 288px;
  background: #273b59;
  color: #fff;
  font-size: 15px;
  font-weight: 500;
}
.brand {
  height: 66px;
  display: flex;
  align-items: center;
  padding-left: 11px;
  background: #2e486b;
  font-family: Lato, sans-serif;
  font-size: 33px;
  font-weight: 300;
}
.brand span {
  padding-left: 6px;
}
.brand sup {
  align-self: flex-start;
  padding-top: 12px;
  font-size: 8px;
}
.collapse {
  width: 100%;
  height: 40px;
  display: flex;
  align-items: center;
  gap: 12px;
  padding-left: 13px;
  background: #3d618f;
  font-size: 16px;
}
.main-menu {
  background: #1f3047;
}
.sidebar nav a {
  height: 40px;
  display: flex;
  align-items: center;
  color: #fff;
}
.sidebar nav span {
  flex: 1;
}
.main-menu a {
  padding: 0 12px 0 13px;
}
.main-menu span {
  padding-left: 12px;
}
.mi {
  width: 21px;
  height: 18px;
}
.chev {
  width: 9px;
  height: 14px;
}
.chev.open {
  width: 14px;
  height: 9px;
}
.gr {
  width: 16px;
  height: 14px;
  margin-left: 24px;
}
.chev.open + .gr {
  margin-left: 21px;
}
.sub-menu a {
  padding: 0 12px 0 48px;
}
.sub-menu .chev.open {
  margin-right: -3px;
}
.sub-menu small {
  font-size: 13px;
}
.sidebar .lvl3 {
  padding-left: 60px;
}
.sidebar .current {
  background: #2e4a70;
}

/* content */
.content {
  flex: 1;
  min-width: 0;
  display: flex;
  flex-direction: column;
  background: #ebf1f6;
}
.topbar {
  flex: none;
  height: 66px;
  display: flex;
  align-items: center;
  gap: 8px;
  padding: 0 19px 0 15px;
  background: #1f3047;
  color: #fff;
}
.topbar h1 {
  margin: 0 auto 0 7px;
  font-size: 20px;
  font-weight: 400;
}
.version {
  display: flex;
  align-items: center;
  gap: 2px;
  margin-right: 16px;
  font-size: 12px;
  color: #b5bfcc;
}
.pill {
  height: 36px;
  display: flex;
  align-items: center;
  gap: 9px;
  padding: 0 10px 0 4px;
  border-radius: 18px;
  background: #3d618f;
  color: #fff;
  font-size: 12px;
  font-weight: 500;
}
.pill-ic {
  width: 28px;
  height: 28px;
  display: flex;
  align-items: center;
  justify-content: center;
  border-radius: 14px;
  background: #1f3047;
}
.pill-ic.wide {
  width: 43px;
  gap: 7px;
}
.caret {
  margin-left: -3px;
}
.actions {
  flex: none;
  height: 68px;
  display: flex;
  align-items: flex-start;
  gap: 12px;
  padding: 13px 32px 0;
  background: linear-gradient(#fff, #f7f9fc);
  box-shadow: 0 2px 10px #d9e1ee;
  clip-path: inset(0 0 -14px 0);
}
.btn {
  height: 41px;
  display: flex;
  align-items: center;
  gap: 16px;
  padding: 0 16px;
  border: 1px solid #c4ccd8;
  border-radius: 3px;
  background: #fff;
  color: #495057;
}
.btn:disabled {
  background: #eef0f4;
  border-color: #e2e6ec;
  color: #a9afb8;
}
.btn i {
  width: 16px;
}
.btn.wide-ic {
  gap: 12px;
}
.btn.tight {
  gap: 3px;
  padding: 0 17px;
}
.btn.join {
  margin-left: -12px;
}
.btn b {
  font-size: 20px;
}
.card {
  flex: 1;
  min-height: 0;
  margin: 15px 0 0 31px;
  padding: 5px 0 0 5px;
  background: #fff;
  position: relative;
  overflow: hidden;
}
.hika-menu {
  height: 38px;
  display: flex;
  gap: 1px;
  padding-left: 22px;
  background: #fafafa;
  border: 1px solid #ddd;
  border-right: none;
}
.hika-menu a {
  display: flex;
  align-items: center;
  gap: 4px;
  padding: 0 8px;
  color: #555;
}
.hika-menu .snug {
  gap: 2px;
}
.hika-menu a::after {
  content: "";
  margin: 4px 0 0 4px;
  border: 4px solid transparent;
  border-top-color: #444;
  border-bottom: none;
}
.hika-menu .on {
  gap: 3px;
  background: #bee1f4;
}
.hika-menu svg {
  color: #2a80bf;
}

/* filters run past the right edge of the card */
.filters {
  margin: 5px -37px 0 0;
}
.frow {
  display: flex;
  justify-content: flex-end;
  align-items: flex-start;
}
.frow.second {
  margin-top: 10px;
}
.group {
  display: flex;
  height: 40px;
}
.group input {
  flex: 1;
  min-width: 0;
  padding: 0 10px;
  border: 1px solid #ced4da;
  background: #fff;
}
.group input::placeholder {
  color: #6c757d;
  opacity: 1;
}
.group button {
  width: 47px;
  display: flex;
  align-items: center;
  justify-content: center;
  background: #3d618f;
  color: #fff;
  border-radius: 0 3px 3px 0;
}
.search {
  width: 641px;
  margin-right: 6px;
}
.search button {
  width: 49px;
  padding-right: 4px;
}
.filter-btn, .reset-btn {
  height: 40px;
  border-radius: 3px;
  background: #3d618f;
  color: #fff;
}
.filter-btn {
  width: 146px;
}
.filter-btn svg {
  margin-left: 14px;
}
.reset-btn {
  width: 88px;
  padding-left: 16px;
  background: #132f53;
  text-align: left;
}
.date, .pay {
  width: 229px;
}
.van {
  width: 57px;
}
.tot {
  width: 71px;
  padding-left: 18px;
}
.pick {
  position: relative;
}
.pay .pick {
  margin-top: 5px;
}
.pick select {
  display: block;
  width: 100%;
  height: 44px;
  padding: 0 48px 0 16px;
  border: 1px solid #ced4da;
  border-radius: 0;
  appearance: none;
  background: linear-gradient(to left, #eff3fb 45px, #fff 45px);
  font-size: 16px;
}
.pick svg {
  position: absolute;
  right: 15px;
  top: 18px;
  width: 16px;
  height: 10px;
  color: #111;
  pointer-events: none;
}
.tags {
  width: 230px;
  height: 48px;
  margin: 0 15px 0 60px;
  padding: 2px 5px;
  border: 1px solid #ced4da;
}
.tags span {
  display: inline-block;
  padding: 0 5px;
  border: 1px solid #aaa;
  background: #eee;
  font-size: 18px;
  font-style: italic;
  color: #666;
}
.tags b {
  font-style: normal;
}
.statuses {
  width: 158px;
  height: 90px;
  padding: 0;
  border: 1px solid #ced4da;
  background: #fff;
  overflow: hidden;
}
.statuses option {
  min-height: 28px;
  padding: 4px 16px;
}
.statuses option:checked {
  background: #1f3047 linear-gradient(#1f3047, #1f3047);
  color: #fff;
}

/* orders */
.orders {
  width: 100%;
  margin-top: 9px;
  table-layout: fixed;
  border-collapse: collapse;
  font-size: 14px;
  line-height: 22px;
}
.c-num { width: 31px; }
.c-check { width: 30px; }
.c-order { width: 131px; }
.c-client { width: 225px; }
.c-pay { width: 125px; }
.c-date { width: 64px; }
.c-mod { width: 134px; }
.c-status { width: 155px; }
.c-total { width: 95px; }
.c-week { width: 93px; }
.c-note { width: 246px; }
.orders th {
  height: 66px;
  padding: 8px;
  text-align: left;
  vertical-align: top;
  white-space: nowrap;
  font-size: 16px;
  font-weight: 700;
  line-height: 24px;
  border-bottom: 2px solid #dfe3e9;
}
.orders td {
  height: 123px;
  padding: 6px 8px;
  vertical-align: top;
  border-bottom: 1px solid #dfe3e9;
}
.orders td.client {
  padding-right: 14px;
}
.orders input {
  display: block;
  width: 13px;
  height: 13px;
  margin-top: 5px;
}
.orders td input {
  appearance: none;
  width: 16px;
  height: 16px;
  border: 1px solid #ccd3dc;
  border-radius: 4px;
}
.orders .nw {
  white-space: nowrap;
}
.order {
  display: flex;
  align-items: center;
  gap: 6px;
  height: 26px;
  padding-top: 5px;
  color: #4870b8;
}
.order svg {
  width: 23px;
  height: 23px;
  margin-top: -6px;
}
.go {
  width: 8px;
  height: 12px;
  vertical-align: middle;
}
svg.ink {
  position: absolute;
  left: 0;
  top: 0;
  fill: none;
  stroke: #0078d7;
  stroke-width: 5px;
  stroke-linecap: round;
  stroke-linejoin: round;
  pointer-events: none;
}

/* debug bar */
.debugbar {
  flex: none;
  height: 28px;
  display: flex;
  align-items: center;
  gap: 8px;
  padding-left: 5px;
  background: #eee;
  border-top: 1px solid #bbb;
  font-size: 14px;
  color: #28486b;
}
.debugbar a, .stat {
  color: #555;
}
.debugbar b {
  padding: 2px 6px;
  border-radius: 3px;
  background: #28486b;
  color: #fff;
  font-size: 11px;
}
.stat {
  padding: 0 5px 0 3px;
  border-right: 1px solid #ddd;
}
.stat.first {
  margin-left: auto;
}
.tools {
  display: flex;
  align-items: center;
  gap: 12px;
  padding-right: 5px;
  color: #000;
}

/* taskbar */
.taskbar {
  height: 48px;
  display: grid;
  grid-template-columns: 1fr auto 1fr;
  align-items: center;
  background: linear-gradient(to right, #e1eef8 22%, #d3e4fb 30%, #d7dcf5 34%, #d5e4fb 42%, #d8dcf0 60%, #d3dff6 70%, #dadcf0 76%, #e2eefa 84%);
  border-top: 1px solid #cbdbe8;
  font-family: "Open Sans", sans-serif;
  font-size: 12px;
  line-height: 16px;
  color: #222;
}
.weather {
  display: flex;
  flex-direction: column;
  padding-left: 27px;
}
.weather .muted {
  font-size: 11px;
  color: #666;
}
.apps {
  display: flex;
  gap: 6px;
}
.apps button {
  width: 38px;
  height: 38px;
  display: flex;
  align-items: center;
  justify-content: center;
  border-radius: 4px;
  position: relative;
}
.apps svg {
  width: 24px;
  height: 24px;
}
.apps .active {
  background: #edf2fc;
}
.apps .active::after, .apps .running::after {
  content: "";
  position: absolute;
  bottom: 0;
  width: 6px;
  height: 3px;
  border-radius: 2px;
  background: #888;
}
.apps .active::after {
  width: 16px;
  background: #0078d4;
}
.tray {
  display: flex;
  align-items: center;
  justify-content: flex-end;
  gap: 8px;
  padding-right: 20px;
}
.tray svg {
  width: 16px;
  height: 16px;
}
.clock {
  display: flex;
  flex-direction: column;
  align-items: flex-end;
  padding-left: 6px;
}
.count {
  width: 20px;
  height: 20px;
  border-radius: 10px;
  background: #0078d4;
  color: #fff;
  font-size: 11px;
  font-weight: 400;
  line-height: 20px;
  text-align: center;
}
```
